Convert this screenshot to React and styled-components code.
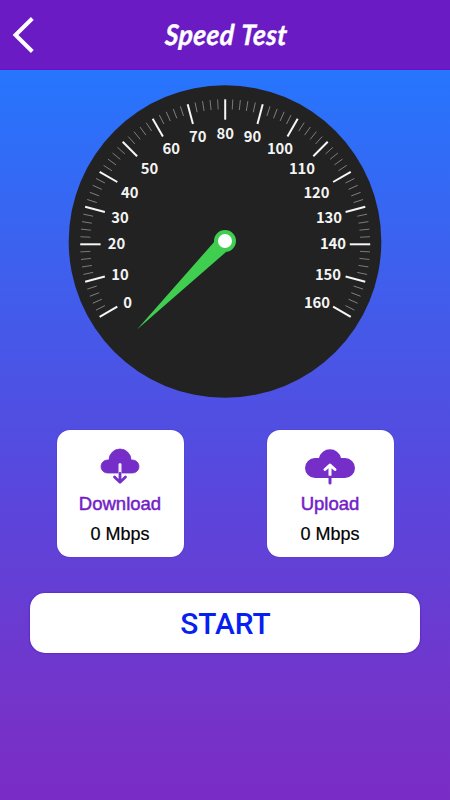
import React, { useState } from 'react';
import styled, { createGlobalStyle } from 'styled-components';

const GlobalStyle = createGlobalStyle`
  body {
    margin: 0;
  }
`;

const Screen = styled.div`
  box-sizing: border-box;
  width: 450px;
  height: 800px;
  overflow: hidden;
  display: flex;
  flex-direction: column;
  background: linear-gradient(to bottom, #2775fd 9%, #4658e8 42%, #5a46dc 62%, #7434ca 88%, #7a2cc5 100%);
  font-family: "Liberation Sans", Arial, sans-serif;
`;

const Header = styled.header`
  box-sizing: border-box;
  height: 70px;
  flex-shrink: 0;
  display: grid;
  grid-template-columns: 48px 1fr 48px;
  align-items: center;
  background-color: #6b1bc4;
  border-bottom: 1px solid #6314c8;
`;

const BackButton = styled.button`
  display: flex;
  width: 48px;
  height: 69px;
  padding: 0;
  border: none;
  background: none;
  cursor: pointer;
`;

const Title = styled.h1`
  margin: 0;
  color: #fff;
  font-family: Lato, "Liberation Sans", sans-serif;
  font-size: 28.5px;
  font-weight: 700;
  font-style: italic;
  line-height: 36px;
  letter-spacing: 0.5px;
  word-spacing: 1px;
  text-align: center;
  white-space: nowrap;
  -webkit-text-stroke: 0.4px #fff;
  transform: translate(1.5px, -1px) skewX(-4deg) scaleX(0.92);
`;

const Main = styled.main`
  display: flex;
  flex-direction: column;
  align-items: center;
  padding-top: 15px;
`;

const Dial = styled.svg`
  display: block;
  width: 314px;
  height: 314px;
`;

const DialLabel = styled.text`
  fill: #f4f4f4;
  font-family: "Noto Sans CJK SC", "Noto Sans", sans-serif;
  font-size: 14.8px;
  font-weight: 700;
  text-anchor: middle;
`;

const Cards = styled.div`
  display: flex;
  gap: 83px;
  margin-top: 31px;
`;

const Card = styled.section`
  box-sizing: border-box;
  width: 127px;
  height: 127px;
  padding-top: 14px;
  display: flex;
  flex-direction: column;
  align-items: center;
  background-color: #fff;
  border-radius: 13px;
  box-shadow: 0 0 1px rgba(60, 20, 160, 0.7);
`;

const CardIcon = styled.svg`
  display: block;
  width: 54px;
  height: 44px;
`;

const CardName = styled.div`
  margin-top: 4px;
  color: #741dc7;
  font-size: 18.5px;
  line-height: 24px;
  -webkit-text-stroke: 0.5px #741dc7;
`;

const CardValue = styled.div`
  margin-top: 7px;
  color: #000;
  font-size: 18px;
  line-height: 22px;
  -webkit-text-stroke: 0.2px #000;
`;

const StartButton = styled.button`
  width: 390px;
  height: 60px;
  margin-top: 36px;
  padding: 0 0 0 1px;
  border: none;
  border-radius: 15px;
  background-color: #fff;
  box-shadow: 0 0 2px rgba(60, 0, 170, 0.8);
  color: #0520f0;
  font-family: Roboto, sans-serif;
  font-size: 29.8px;
  font-weight: 500;
  line-height: 61px;
  cursor: pointer;
`;

// label centers inside the 314px dial
const LABELS = [
    { value: 0, x: 59.5, y: 218 },
    { value: 10, x: 52, y: 189.5 },
    { value: 20, x: 48.5, y: 158.5 },
    { value: 30, x: 52, y: 132.5 },
    { value: 40, x: 61.7, y: 107.5 },
    { value: 50, x: 81.5, y: 83.5 },
    { value: 60, x: 103.3, y: 63.5 },
    { value: 70, x: 129.7, y: 52 },
    { value: 80, x: 157.3, y: 48.5 },
    { value: 90, x: 184.5, y: 52 },
    { value: 100, x: 212, y: 63.5 },
    { value: 110, x: 234, y: 83.5 },
    { value: 120, x: 248.5, y: 107.5 },
    { value: 130, x: 261, y: 132.5 },
    { value: 140, x: 265, y: 158.5 },
    { value: 150, x: 260, y: 189.5 },
    { value: 160, x: 249, y: 218 },
];

const TICKS = Array.from({ length: 81 }, (_, i) => i);

const Gauge = ({ speed }) => {
    return (
        <Dial viewBox="0 0 314 314">
            <circle cx="157" cy="156.5" r="156.3" fill="#222" />
            {TICKS.map((i) => {
                const major = i % 5 === 0;
                return (
                    <line
                        key={i}
                        x1="157.2"
                        x2="157.2"
                        y1="14.3"
                        y2={major ? 34.7 : 24.3}
                        stroke={major ? '#f6f6f6' : '#8c8c8c'}
                        strokeWidth={major ? 2 : 0.8}
                        transform={`rotate(${-120 + i * 3} 157.2 159.3)`}
                    />
                );
            })}
            {LABELS.map((label) => (
                <DialLabel key={label.value} x={label.x} y={label.y + 5.4}>
                    {label.value}
                </DialLabel>
            ))}
            <g transform={`rotate(${speed * 1.5} 157 156)`}>
                <path d="M69 244.5 L147 156 L158 167 Z" fill="#40ce50" />
                <circle cx="157" cy="156" r="9" fill="#fff" stroke="#40ce50" strokeWidth="4" />
            </g>
        </Dial>
    );
};

const DownloadIcon = () => (
    <CardIcon viewBox="0 0 54 44">
        <path
            d="M14.5 29 A6.5 6.5 0 0 1 14.5 16 L16 16 A11 11 0 0 1 38 16 L39.5 16 A6.5 6.5 0 0 1 39.5 29 Z"
            fill="#762ec8"
            stroke="#762ec8"
            strokeWidth="0.8"
        />
        <path d="M27 20.5 V29.5" stroke="#f4ecfa" strokeWidth="3" strokeLinecap="round" />
        <path d="M27 29.5 V38 M21.5 33 L27 38.3 L32.5 33" stroke="#762ec8" strokeWidth="2.8" fill="none" strokeLinecap="round" strokeLinejoin="round" />
    </CardIcon>
);

const UploadIcon = () => (
    <CardIcon viewBox="0 0 54 44">
        <path
            d="M12 34 A10 10 0 0 1 12 14 L16 14 A11.3 11.3 0 0 1 38 14 L42 14 A10 10 0 0 1 42 34 Z"
            fill="#762ec8"
        />
        <path d="M27 31 V21 M22 25.5 L27 21 L32 25.5" stroke="#fff" strokeWidth="3" fill="none" strokeLinecap="round" strokeLinejoin="round" />
        <path d="M27 33 V39" stroke="#762ec8" strokeWidth="3" strokeLinecap="round" />
    </CardIcon>
);

const App = () => {
    const [download] = useState(0);
    const [upload] = useState(0);

    return (
        <Screen>
            <GlobalStyle />
            <Header>
                <BackButton aria-label="Back">
                    <svg width="48" height="69" viewBox="0 0 48 69">
                        <path d="M32.3 18.5 L15.5 35 L32.3 51.5" stroke="#fff" strokeWidth="4" fill="none" />
                    </svg>
                </BackButton>
                <Title>Speed Test</Title>
            </Header>
            <Main>
                <Gauge speed={download} />
                <Cards>
                    <Card>
                        <DownloadIcon />
                        <CardName>Download</CardName>
                        <CardValue>{download} Mbps</CardValue>
                    </Card>
                    <Card>
                        <UploadIcon />
                        <CardName>Upload</CardName>
                        <CardValue>{upload} Mbps</CardValue>
                    </Card>
                </Cards>
                <StartButton>START</StartButton>
            </Main>
        </Screen>
    );
};

export default App;
